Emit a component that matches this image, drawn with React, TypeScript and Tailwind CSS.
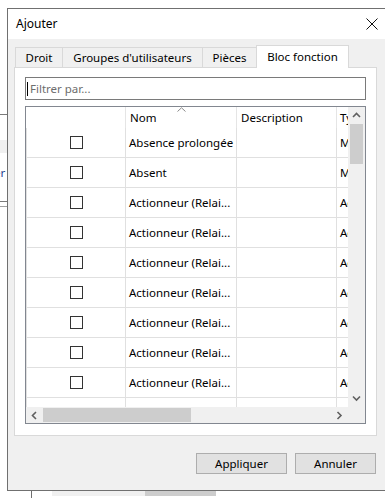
import React from "react";

const rows = [
  { name: "Absence prolongée", type: "M" },
  { name: "Absent", type: "M" },
  { name: "Actionneur (Relai...", type: "A" },
  { name: "Actionneur (Relai...", type: "A" },
  { name: "Actionneur (Relai...", type: "A" },
  { name: "Actionneur (Relai...", type: "A" },
  { name: "Actionneur (Relai...", type: "A" },
  { name: "Actionneur (Relai...", type: "A" },
  { name: "Actionneur (Relai...", type: "A" },
  { name: "", type: "" },
];

const tabs = [
  { label: "Droit", w: "w-[48px]" },
  { label: "Groupes d'utilisateurs", w: "w-[141px]" },
  { label: "Pièces", w: "w-[55px]" },
];

const Chevron = ({ dir }: { dir: "up" | "down" | "left" | "right" }) => {
  const d = {
    up: "M1 5 L4.5 1.5 L8 5",
    down: "M1 1.5 L4.5 5 L8 1.5",
    left: "M5 1 L1.5 4.5 L5 8",
    right: "M1.5 1 L5 4.5 L1.5 8",
  }[dir];
  const vertical = dir === "up" || dir === "down";
  return (
    <svg width={vertical ? 9 : 7} height={vertical ? 7 : 9} viewBox={vertical ? "0 0 9 7" : "0 0 7 9"}>
      <path d={d} fill="none" stroke="#606060" strokeWidth="1.6" />
    </svg>
  );
};

const App = () => {
  return (
    <div className="relative w-[385px] h-[498px] overflow-hidden bg-white font-['Noto_Sans',sans-serif] text-[11.5px] text-black">
      {/* window behind the dialog */}
      <div className="absolute left-0 top-[114px] w-[7px] h-px bg-[#7a7a7a]" />
      <div className="absolute left-0 top-[140px] w-[7px] h-[13px] bg-[#f0f0f0]" />
      <div className="absolute left-[-6px] top-[164px] text-[#1f3f8f]">er</div>
      <div className="absolute left-0 top-[201px] w-[7px] h-px bg-[#7a7a7a]" />
      <div className="absolute left-0 top-[206px] w-[7px] h-px bg-[#a0a0a0]" />
      <div className="absolute left-[31px] top-[490px] w-px h-[8px] bg-[#6e6e6e]" />
      <div className="absolute left-[52px] top-[491px] w-[93px] h-[5px] bg-[#f0f0f0]" />
      <div className="absolute left-[145px] top-[491px] w-[71px] h-[5px] bg-[#cdcdcd]" />

      {/* dialog */}
      <div className="absolute left-[7px] top-[8px] w-[389px] h-[483px] border border-[#707070] bg-[#f0f0f0] flex flex-col">
        <div className="h-[30px] bg-white flex items-center pl-[8px] shrink-0">
          <span className="text-[12px]">Ajouter</span>
          <div className="ml-auto w-[46px] h-full flex items-center justify-center">
            <svg width="12" height="12" viewBox="0 0 12 12">
              <path d="M0.5 0.5 L11.5 11.5 M11.5 0.5 L0.5 11.5" stroke="#111" strokeWidth="1" />
            </svg>
          </div>
        </div>

        <div className="pl-[6px] pt-[6px] flex flex-col">
          <div className="flex items-end h-[22px] pl-[1px]">
            {tabs.map((t, i) => (
              <div
                key={t.label}
                className={`${t.w} h-[20px] border border-b-0 border-[#d9d9d9] bg-[#f0f0f0] flex items-center justify-center ${i > 0 ? "-ml-px" : ""}`}
              >
                {t.label}
              </div>
            ))}
            <div className="w-[93px] h-[23px] -ml-px -mb-px relative z-10 border border-b-0 border-[#d9d9d9] bg-white flex items-start justify-center pt-[2px]">
              Bloc fonction
            </div>
          </div>

          <div className="w-[363px] h-[369px] border border-[#d9d9d9] bg-white pl-[10px] pt-[9px] flex flex-col">
            <div className="w-[341px] h-[23px] border border-[#7a7a7a] flex items-center pl-[1px]">
              <div className="w-px h-[14px] bg-black mr-[2px]" />
              <span className="text-[#6d6d6d]">Filtrer par...</span>
            </div>

            <div className="mt-[6px] w-[341px] h-[318px] border border-[#828790] flex flex-col">
              <div className="flex-1 flex min-h-0">
                <div className="flex-1 overflow-hidden flex flex-col">
                  <div className="h-[21px] flex shrink-0">
                    <div className="w-[100px] shrink-0 border-r border-[#e5e5e5]" />
                    <div className="relative w-[111px] shrink-0 border-r border-[#e5e5e5] pl-[4px] flex items-center">
                      Nom
                      <svg className="absolute left-[51px] top-0" width="9" height="5" viewBox="0 0 9 5">
                        <path d="M0.5 4.5 L4.5 0.8 L8.5 4.5" fill="none" stroke="#8a8a8a" strokeWidth="1" />
                      </svg>
                    </div>
                    <div className="w-[100px] shrink-0 border-r border-[#e5e5e5] pl-[4px] flex items-center">
                      Description
                    </div>
                    <div className="w-[60px] shrink-0 pl-[3px] flex items-center">Type</div>
                  </div>
                  {rows.map((r, i) => (
                    <div key={i} className="h-[30px] flex shrink-0">
                      <div className="w-[100px] shrink-0 border-l border-r border-b border-[#e0e0e0] flex items-center justify-center">
                        {r.type && <div className="w-[13px] h-[13px] border border-[#333333] bg-white" />}
                      </div>
                      <div className="w-[111px] shrink-0 border-r border-b border-[#e0e0e0] pl-[3px] flex items-center whitespace-nowrap overflow-hidden">
                        {r.name}
                      </div>
                      <div className="w-[100px] shrink-0 border-r border-b border-[#e0e0e0]" />
                      <div className="w-[60px] shrink-0 border-b border-[#e0e0e0] pl-[3px] flex items-center">
                        {r.type === "M" ? "Maison" : r.type === "A" ? "Actionneur" : ""}
                      </div>
                    </div>
                  ))}
                </div>
                <div className="w-[17px] shrink-0 bg-[#f0f0f0] flex flex-col">
                  <div className="h-[17px] flex items-center justify-center">
                    <Chevron dir="up" />
                  </div>
                  <div className="h-[40px] mx-[2px] bg-[#cdcdcd]" />
                  <div className="flex-1" />
                  <div className="h-[17px] flex items-center justify-center">
                    <Chevron dir="down" />
                  </div>
                </div>
              </div>
              <div className="h-[16px] shrink-0 flex bg-[#f0f0f0]">
                <div className="w-[17px] flex items-center justify-center">
                  <Chevron dir="left" />
                </div>
                <div className="w-[148px] my-[1px] bg-[#cdcdcd]" />
                <div className="flex-1" />
                <div className="w-[17px] flex items-center justify-center">
                  <Chevron dir="right" />
                </div>
                <div className="w-[17px]" />
              </div>
            </div>
          </div>

          <div className="w-[363px] pr-[1px] mt-[17px] flex justify-end gap-[8px]">
            <button className="w-[91px] h-[21px] border border-[#adadad] bg-[#e1e1e1] flex items-center justify-center">
              Appliquer
            </button>
            <button className="w-[81px] h-[21px] border border-[#adadad] bg-[#e1e1e1] flex items-center justify-center">
              Annuler
            </button>
          </div>
        </div>
      </div>
    </div>
  );
};

export default App;
